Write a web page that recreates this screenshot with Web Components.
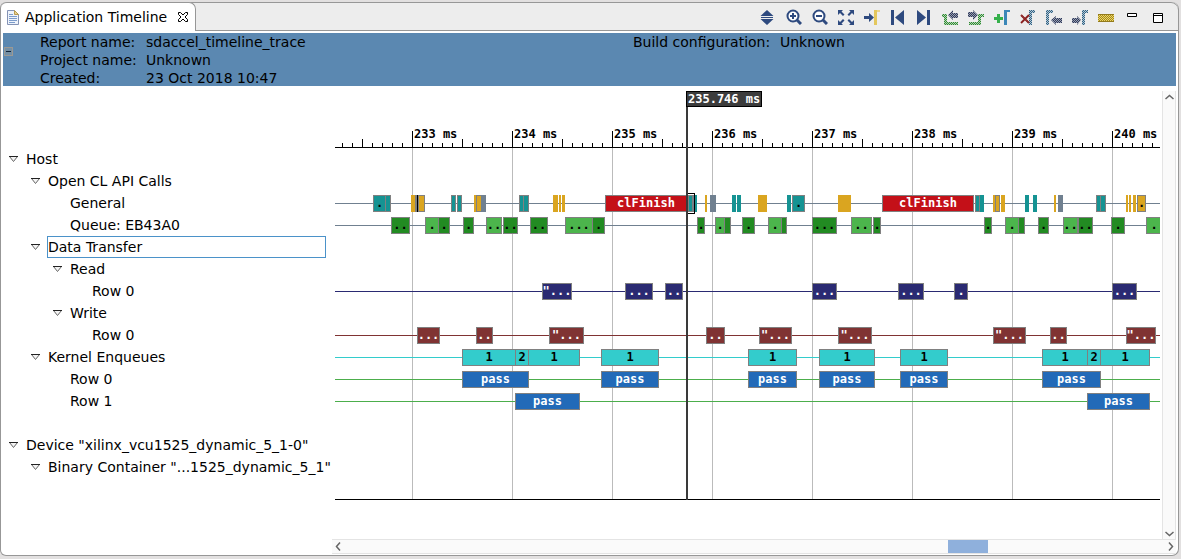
<!DOCTYPE html>
<html lang="en">
<head>
<meta charset="utf-8">
<title>Application Timeline</title>
<style>
html, body { margin: 0; height: 100%; }
body { font: 14px/18px "DejaVu Sans", sans-serif; color: #000; background: #e2e0e0; }
</style>
</head>
<body>
<timeline-app></timeline-app>

<script>
const MONO = '"DejaVu Sans Mono", monospace';

function define(name, html, setup) {
  const template = document.createElement('template');
  template.innerHTML = html;
  customElements.define(name, class extends HTMLElement {
    constructor() {
      super();
      this.attachShadow({ mode: 'open' }).append(template.content.cloneNode(true));
    }
    connectedCallback() {
      if (setup && !this.ready) { this.ready = true; setup(this, this.shadowRoot); }
    }
  });
}

/* ---- Toolbar ---- */
const DITHER = (id, a, b) => `<pattern id="${id}" width="2" height="2" patternUnits="userSpaceOnUse"><path fill="${b}" d="M0 0h2v2H0z"/><path fill="${a}" d="M0 0h1v1H0zM1 1h1v1H1z"/></pattern>`;
const INK = '#2e4a7f';
const defs = `<defs>${DITHER('dk', '#2f3b5c', '#9a9fb0')}${DITHER('gr', '#2f8a33', '#b4d4b4')}${DITHER('bl', '#2f6285', '#b6c8d4')}${DITHER('yl', '#a58a1c', '#ecd66a')}${DITHER('rd', '#8c1515', '#8c3434')}</defs>`;
const ICONS = {
  expand: `<path fill="${INK}" d="M7 1l6.500 6h-13zM1 8h12v1H1zM7 16l-6.500-6h13z"/>`,
  zoomIn: `<circle cx="7" cy="7" r="5.500" fill="#fff" stroke="${INK}" stroke-width="2"/><path stroke="${INK}" stroke-width="2" d="M7 4v6M4 7h6"/><path stroke="${INK}" stroke-width="3" d="M11 11l4 4"/>`,
  zoomOut: `<circle cx="7" cy="7" r="5.500" fill="#fff" stroke="${INK}" stroke-width="2"/><path stroke="${INK}" stroke-width="2" d="M4 7h6"/><path stroke="${INK}" stroke-width="3" d="M11 11l4 4"/>`,
  fit: `<path fill="${INK}" d="M0 1h5L3.500 2.500 6.500 5.500 5 7 2 4 0 6zM16 1h-5l1.500 1.500-3 3L11 7l3-3 2 2zM0 16h5l-1.500-1.500 3-3L5 10l-3 3-2-2zM16 16h-5l1.500-1.500-3-3L11 10l3 3 2-2z"/>`,
  cursor: `<path fill="${INK}" d="M0 7h5V4l5 4.500L5 13v-3H0z"/><path fill="#e3c75d" d="M10 1h3v15h-3z"/><path fill="#ead58d" d="M13 1h3v2h-3z"/>`,
  first: `<path fill="${INK}" d="M1 1h3v15H1zM14 1v15L5 8.500z"/>`,
  last: `<path fill="${INK}" d="M11 1h3v15h-3zM1 1v15l9-7.500z"/>`,
  prevEdge: `<path fill="url(#gr)" d="M0 5h5v8h11v3H2V8H0z"/><path fill="url(#dk)" d="M6 6l5-5v3h5v5h-5v2z"/>`,
  nextEdge: `<path fill="url(#gr)" d="M16 8h-3v8H1v-3h9V5h6z"/><path fill="url(#dk)" d="M10 6L5 1v2H0v5h5v3z"/>`,
  addMarker: `<path fill="#35b04b" d="M3 5h3v3h3v3H6v3H3v-3H0V8h3z"/><path fill="#3b87b8" d="M10 1h6v2h-3v13h-3z"/>`,
  delMarker: `<path fill="url(#bl)" d="M9 1h6v3h-3v12H9z"/><path stroke="url(#rd)" stroke-width="2" d="M1 6l8 8M9 6l-8 8"/>`,
  prevMarker: `<path fill="url(#bl)" d="M0 1h7v3H3v12H0z"/><path fill="url(#dk)" d="M5 11l5-4v2h6v5h-6v2z"/>`,
  nextMarker: `<path fill="url(#bl)" d="M10 1h6v3h-3v12h-3z"/><path fill="url(#dk)" d="M9 11L5 7v2H0v5h5v2z"/>`,
  ruler: `<path fill="url(#yl)" d="M0 5h16v8H0z"/><path stroke="#937b1d" d="M0 5.500h16M0 12.500h16"/>`,
  min: `<path fill="#fff" stroke="#000" d="M3.500 4.500h9v3h-9z"/>`,
  max: `<path fill="#fff" stroke="#000" d="M3.500 4.500h9v9h-9z"/><path stroke="#000" d="M3 6.500h10"/>`
};
define('tool-button', `
<style>
:host { display: block; }
button { display: block; box-sizing: border-box; width: 26px; height: 27px; padding: 6px 5px 5px; border: 0; background: none; }
svg { display: block; width: 16px; height: 16px; }
</style>
<button type="button"></button>`, (el, root) => {
  const b = root.querySelector('button');
  b.setAttribute('aria-label', el.getAttribute('label'));
  b.innerHTML = `<svg viewBox="0 0 16 16" fill="none">${defs}${ICONS[el.getAttribute('icon')]}</svg>`;
});

define('view-tab', `
<style>
:host { display: flex; align-items: center; gap: 6px; box-sizing: border-box; height: 29px; padding: 0 6px 0 6px;
  background: #fff; border: 1px solid #979797; border-bottom: 0; border-left: 0; border-radius: 6px 7px 0 0; }
svg { display: block; flex: none; }
button { display: flex; padding: 0; margin-left: 4px; border: 0; background: none; }
</style>
<svg width="12" height="15" viewBox="0 0 12 15" fill="none"><path fill="#eef3fb" stroke="#8493b5" d="M.5.5h7l4 4v10H.5z"/><path fill="#e8d28c" stroke="#b89b52" d="M7.500.5v4h4z"/><path stroke="#7c9ccb" d="M2 4.500h4M2 6.500h8M2 8.500h8M2 10.500h8M2 12.500h6"/></svg>
<slot></slot>
<button type="button" aria-label="Close"><svg width="12" height="12" viewBox="0 0 12 12" fill="#fff" stroke="#000"><path d="M1.500 1.500h2L6 4l2.500-2.500h2v2L8 6l2.500 2.500v2h-2L6 8l-2.500 2.500h-2v-2L4 6 1.500 3.500z"/></svg></button>`);

define('view-toolbar', `
<style>
:host { display: flex; flex: 1; justify-content: flex-end; box-sizing: border-box; height: 29px; padding: 1px 7px 0 0; border-bottom: 1px solid #979797; }
</style><slot></slot>`);

/* ---- Report summary ---- */
define('report-summary', `
<style>
:host { display: flex; background: #5b88b1; margin: 0 2px; }
button { align-self: flex-start; box-sizing: border-box; width: 9px; height: 9px; margin: 14px 27px 0 1px; padding: 0; background: #7590a5; border: 1px solid #9b9994; display: flex; align-items: center; justify-content: center; }
button::before { content: ""; width: 5px; height: 1px; background: #10243a; }
.cols { flex: 1; display: grid; grid-template-columns: 1fr 1fr; column-gap: 50px; height: 53px; }
</style>
<button type="button" aria-label="Collapse report details"></button>
<div class="cols"><slot></slot></div>`);
define('property-list', `
<style>
:host { display: block; --label: 106px; }
dl { display: grid; grid-template-columns: var(--label) 1fr; margin: 0; white-space: nowrap; }
dt, dd { margin: 0; }
</style><dl></dl>`, (el, root) => {
  root.querySelector('dl').innerHTML = el.getAttribute('items').split('|')
    .map(p => p.split('=')).map(([k, v]) => `<dt>${k}</dt><dd>${v}</dd>`).join('');
});

/* ---- Tree ---- */
define('tree-row', `
<style>
:host { display: flex; align-items: center; height: 22px; white-space: nowrap; padding-left: calc(var(--level) * 22px + 7px); }
button { display: flex; width: 12px; margin-right: 5px; padding: 0; border: 0; background: none; }
:host([leaf]) button { visibility: hidden; }
.label { flex: 1; box-sizing: border-box; height: 22px; margin-right: 5px; border: 1px solid transparent; line-height: 20px; }
:host([selected]) .label { border-color: #4b92c9; }
</style>
<button type="button" aria-label="Toggle"><svg width="12" height="8" viewBox="0 0 12 8"><path d="M1.500 1.500h8L5.500 6.500z" fill="#f4f4f4" stroke="#666"/><path d="M1 1.500h9" stroke="#222"/></svg></button>
<span class="label"><slot></slot></span>`, el => {
  el.setAttribute('role', 'treeitem');
  el.style.setProperty('--level', el.getAttribute('level') || 0);
});
define('tree-panel', `
<style>:host { display: block; flex: none; width: 330px; padding-top: 61px; }</style>
<slot></slot>`, el => el.setAttribute('role', 'tree'));

/* ---- Timeline: one pixel is a hundredth of a millisecond ---- */
const ORIGIN = 335;
define('event-bar', `
<style>
:host { position: absolute; top: 3px; display: flex; align-items: center; justify-content: center; box-sizing: border-box;
  height: 17px; border: 1px solid #808080; overflow: hidden; white-space: pre; font: bold 12px/15px ${MONO}; color: #000; background: var(--fill); }
:host([flat]) { border: 0; }
:host([kind=teal]) { --fill: #159393; }
:host([kind=gold]) { --fill: #daa520; }
:host([kind=slate]) { --fill: #708090; }
:host([kind=black]) { --fill: #000; }
:host([kind=dark]) { --fill: #228b22; }
:host([kind=light]) { --fill: #4cb54c; }
:host([kind=cyan]) { --fill: #33cccc; }
:host([kind=red]) { --fill: #c41018; color: #fff; }
:host([kind=navy]) { --fill: #2a2a72; color: #fff; }
:host([kind=maroon]) { --fill: #803333; color: #fff; }
:host([kind=blue]) { --fill: #226ab8; color: #fff; }
</style><slot></slot>`, el => {
  const s = +el.getAttribute('start'), e = +el.getAttribute('end');
  el.style.left = s - ORIGIN + 'px';
  el.style.width = e - s + 'px';
});

define('timeline-lane', `
<style>
:host { display: block; position: relative; height: 22px; overflow: hidden; }
:host([line]) { background: linear-gradient(var(--line), var(--line)) 0 11px / 100% 1px no-repeat; }
.sel { position: absolute; left: 351px; top: 1px; width: 9px; height: 21px; box-sizing: border-box; border: 1px solid #000; }
</style><div class="bars"></div>`, (el, root) => {
  const name = el.getAttribute('data');
  if (el.hasAttribute('line')) el.style.setProperty('--line', el.getAttribute('line'));
  if (!name) return;
  const box = root.querySelector('.bars');
  for (const item of LANES[name].trim().split(/\s+/)) {
    const [start, end, kind, text] = item.split(',');
    const bar = document.createElement('event-bar');
    bar.setAttribute('start', start);
    bar.setAttribute('end', end);
    bar.setAttribute('kind', kind.replace('-', ''));
    if (kind.endsWith('-')) bar.setAttribute('flat', '');
    if (text) bar.textContent = text;
    box.append(bar);
  }
  if (el.hasAttribute('marked')) box.insertAdjacentHTML('beforeend', '<div class="sel"></div>');
});

const LANES = {
  general: `373,386,teal,. 385,391,teal 411,415,gold- 415,417,slate 417,418,black- 418,425,gold
    451,456,teal 457,462,teal 474,476,gold- 476,482,gold 481,486,slate- 519,524,teal 523,529,teal
    553,558,gold- 559,561,gold- 562,565,gold- 605,687,red,clFinish 688,693,teal 692,695,slate 695,697,teal-
    705,707,gold- 710,716,slate- 732,736,teal- 737,741,teal- 758,767,gold- 787,791,teal- 792,805,teal,.
    838,851,gold- 882,974,red,clFinish 975,980,teal 980,984,teal- 993,995,gold- 995,1000,gold 1001,1005,gold-
    1025,1029,teal- 1033,1037,teal- 1054,1056,gold- 1058,1063,slate- 1096,1101,teal 1100,1106,teal
    1126,1128,gold- 1129,1131,gold- 1133,1136,gold- 1137,1146,gold,.`,
  queue: `391,410,dark,.. 425,439,light,. 438,450,dark,. 463,474,dark,. 486,502,light,.. 503,518,dark,..
    530,548,dark,.. 565,593,light,... 592,605,dark,. 697,705,dark,. 715,725,light,. 724,731,dark
    742,755,dark,. 768,782,light,. 781,787,dark 812,837,dark,... 851,872,light,.. 873,881,dark,.
    984,992,dark,. 1005,1019,light,. 1018,1025,dark 1038,1049,dark,. 1063,1078,light,.. 1078,1093,dark,..
    1111,1125,dark,. 1146,1162,light,.`,
  read: `542,572,navy,"... 625,653,navy,... 665,683,navy,.. 812,837,navy,... 898,924,navy,... 954,968,navy,. 1112,1137,navy,...`,
  write: `417,440,maroon,... 476,493,maroon,.. 549,584,maroon,"... 706,725,maroon,.. 759,792,maroon,"...
    838,872,maroon,"... 993,1026,maroon,"... 1050,1067,maroon,.. 1126,1156,maroon,"...`,
  kernel: `462,516,cyan,1 515,529,cyan,2 528,580,cyan,1 601,659,cyan,1 748,797,cyan,1 819,875,cyan,1 900,948,cyan,1
    1042,1088,cyan,1 1087,1101,cyan,2 1100,1150,cyan,1`,
  pass0: `462,529,blue,pass 601,659,blue,pass 748,797,blue,pass 819,875,blue,pass 900,948,blue,pass 1042,1101,blue,pass`,
  pass1: `515,580,blue,pass 1087,1150,blue,pass`
};

define('time-ruler', `
<style>
:host { display: flex; height: 21px; padding-left: 79px; overflow: hidden; border-bottom: 1px solid #000; font: bold 12px/16px ${MONO};
  background:
    linear-gradient(90deg, #000 1px, transparent 1px) 7px 100% / 10px 4px repeat-x,
    linear-gradient(90deg, #000 1px, transparent 1px) 27px 100% / 50px 8px repeat-x,
    linear-gradient(90deg, #000 1px, transparent 1px) 77px 100% / 100px 16px repeat-x; }
span { flex: none; width: 100px; white-space: nowrap; }
</style>`, (el, root) => {
  for (let ms = +el.getAttribute('from'); ms <= +el.getAttribute('to'); ms++) {
    const s = document.createElement('span');
    s.textContent = ms + ' ms';
    root.append(s);
  }
});

define('time-cursor', `
<style>
:host { position: absolute; left: 351px; top: 4px; bottom: 0; display: flex; flex-direction: column; align-items: flex-start; z-index: 2; pointer-events: none; }
.tag { box-sizing: border-box; height: 16px; padding: 0 1px; border: 1px solid #000; background: #3c3c3c; color: #fff; font: bold 12px/14px ${MONO}; white-space: nowrap; }
.line { flex: 1; width: 2px; background: #3a3a3a; }
</style><div class="tag"><slot></slot></div><div class="line"></div>`);

define('timeline-plot', `
<style>
:host { display: block; flex: 1; min-width: 0; align-self: flex-start; position: relative; padding-top: 39px; margin: 0 2px 0 4px; }
.lanes { padding-bottom: 21px; border-bottom: 1px solid #000; background: linear-gradient(90deg, #bbb 1px, transparent 1px) 77px 0 / 100px 100% repeat-x; }
</style>
<slot name="ruler"></slot><div class="lanes"><slot></slot></div><slot name="cursor"></slot>`);

/* ---- Scroll bars ---- */
define('scroll-strip', `
<style>
:host { display: flex; justify-content: space-between; box-sizing: border-box; background: #fafafa; border: 0 solid #e4e4e4; }
:host([dir=v]) { flex-direction: column; width: 14px; border-width: 0 1px; margin-top: 4px; }
:host([dir=h]) { height: 15px; border-width: 1px 0; }
button { display: flex; align-items: center; justify-content: center; width: 12px; height: 12px; padding: 0; border: 0; background: none; }
.track { flex: 1; display: flex; }
.track i { display: none; }
:host([dir=h]) .track i { display: block; flex: 604; }
:host([dir=h]) .track i + b + i { flex: 176; }
b { display: none; width: 40px; background: #8fb0dc; }
:host([dir=h]) b { display: block; }
:host([dir=v]) svg { transform: rotate(90deg); }
</style>
<button type="button" aria-label="Scroll back"><svg width="9" height="9" viewBox="0 0 9 9"><path d="M6 .5L2.500 4.500 6 8.500" fill="none" stroke="#666" stroke-width="1.500"/></svg></button>
<div class="track"><i></i><b></b><i></i></div>
<button type="button" aria-label="Scroll forward"><svg width="9" height="9" viewBox="0 0 9 9"><path d="M3 .5L6.500 4.500 3 8.500" fill="none" stroke="#666" stroke-width="1.500"/></svg></button>`);

/* ---- Page ---- */
define('timeline-app', `
<style>
:host { display: flex; flex-direction: column; box-sizing: border-box; min-height: 100vh; padding: 2px 2px 3px 0; }
.view { flex: 1; display: flex; flex-direction: column; background: #fff; border: 1px solid #979797; border-top-width: 0; border-radius: 6px 7px 7px 6px; }
.top { display: flex; align-items: flex-start; height: 31px; background: linear-gradient(#ededed 29px, #fff 29px); border-radius: 6px 7px 0 0; box-shadow: inset 0 1px #979797; }
.body { flex: 1; display: flex; margin-right: 2px; padding-top: 1px; }
scroll-strip[dir=h] { margin: 0 2px 1px 331px; }
</style>
<div class="view">
  <div class="top">
    <view-tab>Application Timeline</view-tab>
    <view-toolbar>
      <tool-button icon="expand" label="Expand rows"></tool-button>
      <tool-button icon="zoomIn" label="Zoom in"></tool-button>
      <tool-button icon="zoomOut" label="Zoom out"></tool-button>
      <tool-button icon="fit" label="Zoom fit"></tool-button>
      <tool-button icon="cursor" label="Go to cursor"></tool-button>
      <tool-button icon="first" label="Go to start"></tool-button>
      <tool-button icon="last" label="Go to end"></tool-button>
      <tool-button icon="prevEdge" label="Previous transition"></tool-button>
      <tool-button icon="nextEdge" label="Next transition"></tool-button>
      <tool-button icon="addMarker" label="Add marker"></tool-button>
      <tool-button icon="delMarker" label="Delete marker"></tool-button>
      <tool-button icon="prevMarker" label="Previous marker"></tool-button>
      <tool-button icon="nextMarker" label="Next marker"></tool-button>
      <tool-button icon="ruler" label="Floating ruler"></tool-button>
      <tool-button icon="min" label="Minimize"></tool-button>
      <tool-button icon="max" label="Maximize"></tool-button>
    </view-toolbar>
  </div>
  <report-summary>
    <property-list items="Report name:=sdaccel_timeline_trace|Project name:=Unknown|Created:=23 Oct 2018 10:47"></property-list>
    <property-list style="--label:147px" items="Build configuration:=Unknown"></property-list>
  </report-summary>
  <div class="body">
    <tree-panel>
      <tree-row>Host</tree-row>
      <tree-row level="1">Open CL API Calls</tree-row>
      <tree-row level="2" leaf>General</tree-row>
      <tree-row level="2" leaf>Queue: EB43A0</tree-row>
      <tree-row level="1" selected>Data Transfer</tree-row>
      <tree-row level="2">Read</tree-row>
      <tree-row level="3" leaf>Row 0</tree-row>
      <tree-row level="2">Write</tree-row>
      <tree-row level="3" leaf>Row 0</tree-row>
      <tree-row level="1">Kernel Enqueues</tree-row>
      <tree-row level="2" leaf>Row 0</tree-row>
      <tree-row level="2" leaf>Row 1</tree-row>
      <tree-row leaf></tree-row>
      <tree-row>Device "xilinx_vcu1525_dynamic_5_1-0"</tree-row>
      <tree-row level="1">Binary Container "...1525_dynamic_5_1"</tree-row>
    </tree-panel>
    <timeline-plot>
      <time-ruler slot="ruler" from="233" to="240"></time-ruler>
      <time-cursor slot="cursor">235.746 ms</time-cursor>
      <timeline-lane></timeline-lane>
      <timeline-lane></timeline-lane>
      <timeline-lane line="#708090" data="general" marked></timeline-lane>
      <timeline-lane line="#708090" data="queue"></timeline-lane>
      <timeline-lane></timeline-lane>
      <timeline-lane></timeline-lane>
      <timeline-lane line="#2a2a72" data="read"></timeline-lane>
      <timeline-lane></timeline-lane>
      <timeline-lane line="#803333" data="write"></timeline-lane>
      <timeline-lane line="#33cccc" data="kernel"></timeline-lane>
      <timeline-lane line="#4cae4c" data="pass0"></timeline-lane>
      <timeline-lane line="#4cae4c" data="pass1"></timeline-lane>
      <timeline-lane></timeline-lane>
      <timeline-lane></timeline-lane>
      <timeline-lane></timeline-lane>
    </timeline-plot>
    <scroll-strip dir="v"></scroll-strip>
  </div>
  <scroll-strip dir="h"></scroll-strip>
</div>`);
</script>
</body>
</html>
